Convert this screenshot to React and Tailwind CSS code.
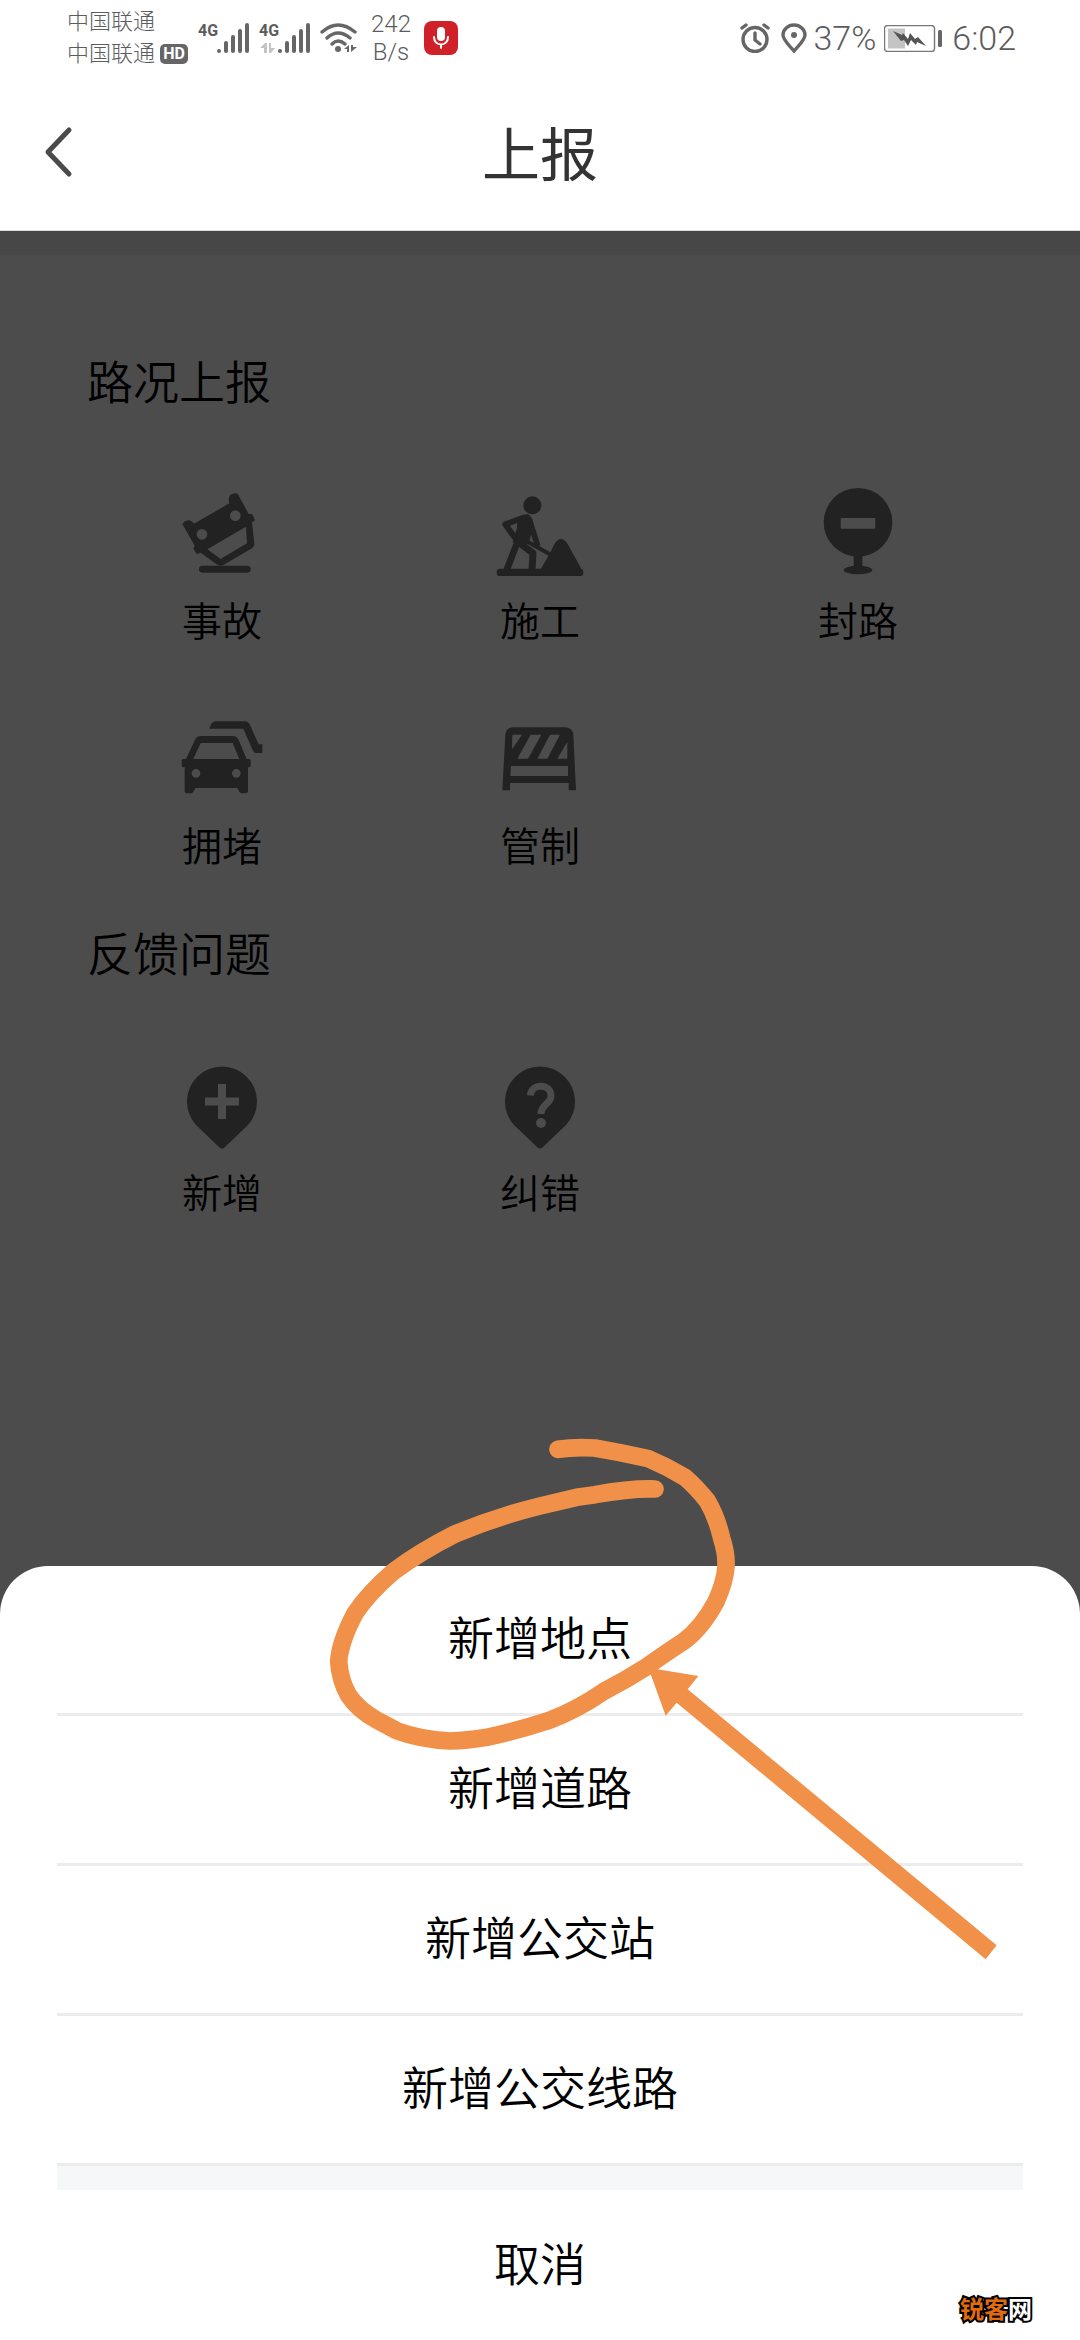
import React from "react";

function SignalBars() {
  return (
    <svg viewBox="0 0 32 30" className="h-[30px] w-8" fill="#666" aria-hidden="true">
      <circle cx="2" cy="28" r="2" />
      <rect x="7" y="18" width="4" height="12" rx="2" />
      <rect x="14" y="12" width="4" height="18" rx="2" />
      <rect x="21" y="6" width="4" height="24" rx="2" />
      <rect x="28" y="0" width="4" height="30" rx="2" />
    </svg>
  );
}

function Signal({ data }) {
  return (
    <div className="flex h-[30px]">
      <div className="flex w-[19px] flex-col justify-between">
        <span className="text-base leading-4 font-bold">4G</span>
        {data && (
          <svg viewBox="0 0 15 10" className="mx-px h-[10px] w-[15px]" fill="#c4c4c4" aria-hidden="true">
            <path d="M5 0h2v10H4V5H0zM9 0h2v5h4l-4 5H9z" />
          </svg>
        )}
      </div>
      <SignalBars />
    </div>
  );
}

function StatusBar() {
  return (
    <div className="flex h-[76px] items-center justify-between pr-16 pl-[67px] font-['Roboto','Noto_Sans_CJK_SC',sans-serif] text-[#5c5c5c]">
      <div className="flex items-center">
        <div className="w-[131px] text-[22px] leading-8 font-light">
          <div>中国联通</div>
          <div className="flex items-center gap-[5px]">
            中国联通
            <span className="flex h-5 w-7 items-center justify-center rounded-[5px] bg-[#666] text-base font-bold text-white">HD</span>
          </div>
        </div>
        <div className="flex items-center gap-[10px]">
          <Signal />
          <Signal data />
          <svg viewBox="0 0 37 30" className="h-[30px] w-[37px]" fill="none" stroke="#666" strokeWidth="3.4" strokeLinecap="round" aria-hidden="true">
            <path d="M2 9Q18 -5 35 9M7 15Q18 5 30 15M12 21Q18 15 25 21" />
            <circle cx="18" cy="26" r="3" fill="#666" stroke="none" />
            <path d="M29 22v7h-2v-3h-3zM31 22v7l6-5h-4v-2z" fill="#666" stroke="none" />
          </svg>
        </div>
        <div className="ml-[14px] w-10 text-center text-2xl leading-7 font-light">
          242
          <br />
          B/s
        </div>
        <div className="ml-[13px] flex size-[34px] items-center justify-center rounded-lg bg-[#cf2127]">
          <svg viewBox="0 0 18 24" className="h-6 w-[18px]" fill="none" stroke="#fff" strokeWidth="2" strokeLinecap="round" aria-hidden="true">
            <rect x="5" y="1" width="8" height="14" rx="4" fill="#fff" stroke="none" />
            <path d="M2 11c0 10 14 10 14 0M9 19v3" />
          </svg>
        </div>
      </div>
      <div className="flex items-center text-[34px] font-light">
        <svg viewBox="0 0 30 30" className="size-[30px]" fill="none" stroke="#666" strokeWidth="3.400" strokeLinecap="round" aria-hidden="true">
          <circle cx="15" cy="16.500" r="12" />
          <path d="M15 10v7l5 4M2 5l4-3M28 5l-4-3" />
        </svg>
        <svg viewBox="0 0 26 30" className="ml-[11px] h-[30px] w-[26px]" fill="none" stroke="#666" strokeWidth="3.400" aria-hidden="true">
          <path d="M13 28C8 22 2 17 2 12a11 10 0 0 1 22 0c0 5-6 10-11 16z" />
          <circle cx="13" cy="12" r="3" fill="#666" stroke="none" />
        </svg>
        <span className="ml-[6px]">37%</span>
        <svg viewBox="0 0 58 27" className="ml-2 h-[27px] w-[58px]" aria-hidden="true">
          <rect x="0.500" y="0.500" width="50" height="26" rx="3" fill="none" stroke="#777" strokeWidth="1.400" />
          <rect x="4" y="3.500" width="17" height="20" fill="#c4c4c4" />
          <path d="M9 6l9 4 1-2 5 6 2-6 5 6 3-2 8 9-9-4-1 3-5-5-3 6-4-6-3 1z" fill="#555" />
          <rect x="54" y="5" width="4" height="17" rx="1.500" fill="#666" />
        </svg>
        <span className="ml-[10px]">6:02</span>
      </div>
    </div>
  );
}

function AccidentIcon() {
  return (
    <svg viewBox="72 78 288 288" className="size-24" fill="#222" aria-hidden="true">
      <path
        fillRule="evenodd"
        d="M97 192Q103 181 118 181Q126 183 132 191L238 130Q234 114 240 106Q250 97 263 101L296 162L307 163L315 181L306 187L313 252Q313 260 306 265L225 312Q212 322 200 313L152 278L140 282L130 266L134 257ZM172 268L212 297L291 250L288 200ZM140 223a16 16 0 1 0 32 0a16 16 0 1 0-32 0ZM240 167a16 16 0 1 0 32 0a16 16 0 1 0-32 0Z"
      />
      <rect x="147" y="317" width="155" height="21" rx="10" />
    </svg>
  );
}

function RoadworkIcon() {
  return (
    <svg viewBox="1026 78 288 288" className="size-24" fill="#222" aria-hidden="true">
      <circle cx="1147" cy="136" r="27" />
      <rect x="1040" y="326" width="260" height="22" rx="10" />
      <path d="M1172 328L1200 280L1213 252Q1233 222 1253 252L1298 334L1290 346H1180Z" />
      <path d="M1104 172L1132 162Q1143 166 1147 180L1150 195L1138 245L1120 258L1088 246L1092 232L1100 208Z" />
      <g fill="none" stroke="#222" strokeLinejoin="round">
        <path d="M1126 171L1066 193L1100 240" strokeWidth="18" />
        <path d="M1138 178L1163 258" strokeWidth="17" />
        <path d="M1104 242L1070 330" strokeWidth="20" />
        <path d="M1108 248L1149 280L1146 330" strokeWidth="21" />
        <path d="M1130 244L1204 285" strokeWidth="12" />
      </g>
    </svg>
  );
}

function ClosedIcon() {
  return (
    <svg viewBox="90 78 288 288" className="size-24" fill="#222" aria-hidden="true">
      <path fillRule="evenodd" d="M131 187a103 103 0 1 0 206 0a103 103 0 1 0-206 0ZM185 174H283Q286 174 286 177V203Q286 206 283 206H185Q182 206 182 203V177Q182 174 185 174Z" />
      <rect x="221" y="285" width="26" height="40" />
      <ellipse cx="234" cy="330" rx="43" ry="13" />
    </svg>
  );
}

function JamIcon() {
  return (
    <svg viewBox="72 63 288 288" className="size-24" fill="#222" aria-hidden="true">
      <path
        fillRule="evenodd"
        d="M108 207L136 148Q141 138 152 138H249Q260 138 265 148L290 207H297Q302 207 302 212V228Q302 232 297 232H294V304Q294 310 288 310H276Q268 310 262 294H136Q130 310 122 310H110Q104 310 104 304V232H100Q95 232 95 228V212Q95 207 100 207ZM152 159L130 207H268L248 159ZM125 250a13 13 0 1 0 26 0a13 13 0 1 0-26 0ZM246 250a13 13 0 1 0 26 0a13 13 0 1 0-26 0Z"
      />
      <path d="M178 116Q184 94 198 94H284Q294 94 299 103L326 163H337V189H314L308 180L280 116Z" />
    </svg>
  );
}

function BarrierIcon() {
  return (
    <svg viewBox="1026 63 288 288" className="size-24" fill="#222" aria-hidden="true">
      <path
        fillRule="evenodd"
        d="M1057 301L1066 135Q1068 112 1090 112H1245Q1268 112 1270 135L1278 301H1256V279H1080V301ZM1083 228L1081 258H1254V228ZM1087 134H1116L1086 178ZM1142 134H1174L1134 206H1102ZM1200 134H1230L1192 206H1162ZM1252 155V206H1222Z"
      />
    </svg>
  );
}

function PinIcon({ children }) {
  return (
    <svg viewBox="0 0 96 96" className="size-24" aria-hidden="true">
      <path d="M22 67A35 35 0 1 1 74 67L51 89Q48 92 45 89Z" fill="#222" />
      <g fill="none" stroke="#4c4c4c">{children}</g>
    </svg>
  );
}

function AddIcon() {
  return (
    <PinIcon>
      <path d="M48 26V61M31 43.500H65" strokeWidth="8" />
    </PinIcon>
  );
}

function FixIcon() {
  return (
    <PinIcon>
      <path d="M38.500 37.500C39 25 59 25 59 38C59 46 49 46 49 56" strokeWidth="7" />
      <circle cx="49" cy="65" r="5" fill="#4c4c4c" stroke="none" />
    </PinIcon>
  );
}

const sections = [
  {
    title: "路况上报",
    items: [
      ["事故", AccidentIcon],
      ["施工", RoadworkIcon],
      ["封路", ClosedIcon],
      ["拥堵", JamIcon],
      ["管制", BarrierIcon],
    ],
  },
  {
    title: "反馈问题",
    items: [
      ["新增", AddIcon],
      ["纠错", FixIcon],
    ],
  },
];

const options = ["新增地点", "新增道路", "新增公交站", "新增公交线路"];

function Section({ title, items }) {
  return (
    <section>
      <h2 className="px-6 text-[46px] leading-[70px] font-[350]">{title}</h2>
      <div className="mt-[72px] grid grid-cols-3 gap-y-[62px]">
        {items.map(([label, Icon]) => (
          <button key={label} type="button" className="flex flex-col items-center gap-[7px]">
            <Icon />
            <span className="text-[40px] leading-[60px]">{label}</span>
          </button>
        ))}
      </div>
    </section>
  );
}

function Annotation() {
  return (
    <svg
      viewBox="60 90 2070 1620"
      className="pointer-events-none absolute -top-[136px] left-1/2 -ml-[220px] h-[540px] w-[690px]"
      aria-hidden="true"
    >
      <path
        d="M774 148C800 144 850 142 884 144L960 158L1045 176Q1100 199 1155 232Q1190 262 1222 303Q1250 350 1265 415Q1280 460 1278 500Q1275 545 1248 605Q1205 685 1150 725Q1100 757 1040 800Q980 838 910 875Q830 930 745 962Q650 993 560 1012Q500 1022 450 1023Q360 1018 290 992L230 960Q175 930 145 885Q120 840 116 785Q120 725 165 640Q205 580 280 515Q360 455 465 402Q590 350 720 318L830 292L885 284Q990 265 1065 267"
        fill="none"
        stroke="#f19149"
        strokeWidth="53"
        strokeLinecap="round"
        strokeLinejoin="round"
      />
      <path d="M1045 803L1195 828L1163 868L2090 1636L2057 1678L1130 908L1097 947Z" fill="#f19149" />
    </svg>
  );
}

export default function App() {
  return (
    <div className="relative flex min-h-screen flex-col bg-[#4c4c4c] font-['Noto_Sans_CJK_SC',sans-serif] font-[350] text-black">
      <header className="border-b border-[#d5dcdc] bg-white">
        <StatusBar />
        <div className="grid h-[154px] grid-cols-[1fr_auto_1fr] items-center px-10">
          <button type="button" aria-label="返回" className="w-fit">
            <svg viewBox="0 0 36 56" className="h-14 w-9" fill="none" stroke="#4a4a4a" strokeWidth="5" strokeLinecap="round" strokeLinejoin="round">
              <path d="M29 5L8 27L29 49" />
            </svg>
          </button>
          <h1 className="pb-1 text-[58px] leading-[80px] font-normal text-[#333]">上报</h1>
        </div>
      </header>
      <div className="h-6 bg-[#474747]" />
      <main className="flex flex-col gap-[42px] px-[63px] pt-[89px]">
        <Section {...sections[0]} />
        <Section {...sections[1]} />
      </main>
      <div role="dialog" aria-label="新增" className="relative mt-auto rounded-t-[48px] bg-white px-[57px] text-[46px]">
        {options.map((option) => (
          <button key={option} type="button" className="block h-[150px] w-full border-b-[3px] border-[#ececec] pb-2">
            {option}
          </button>
        ))}
        <div className="h-6 bg-[#f6f7f9]" />
        <button type="button" className="block h-[150px] w-full pb-2">
          取消
        </button>
        <Annotation />
      </div>
      <div className="absolute right-12 bottom-4 text-2xl leading-8 font-bold text-[#e06c10] [-webkit-text-stroke:4px_#000] [paint-order:stroke_fill]">
        锐客<span className="text-white">网</span>
      </div>
    </div>
  );
}
